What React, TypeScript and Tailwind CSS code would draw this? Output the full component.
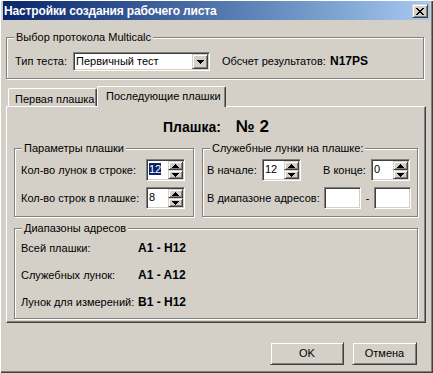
import type { ReactNode } from 'react';

const sunken =
  'border border-t-[#808080] border-l-[#808080] border-r-white border-b-white shadow-[inset_1px_1px_0_#404040,inset_-1px_-1px_0_#d4d0c8]';
const raised =
  'border border-t-[#d4d0c8] border-l-[#d4d0c8] border-r-[#404040] border-b-[#404040] shadow-[inset_1px_1px_0_#ffffff,inset_-1px_-1px_0_#808080]';

function Group({ title, className, children }: { title: string; className: string; children?: ReactNode }) {
  return (
    <div className={`relative border border-[#808080] shadow-[inset_1px_1px_0_#ffffff,1px_1px_0_#ffffff] ${className}`}>
      <span className="absolute left-[7px] top-[-7px] bg-[#d4d0c8] px-[2px] leading-[13px]">{title}</span>
      {children}
    </div>
  );
}

function Arrow({ down }: { down?: boolean }) {
  return (
    <svg width="7" height="4" viewBox="0 0 7 4" shapeRendering="crispEdges">
      <polygon points={down ? '0,0 7,0 3.5,4' : '3.5,0 7,4 0,4'} fill="#000" />
    </svg>
  );
}

function Spin({ value, selected, className }: { value: string; selected?: boolean; className: string }) {
  return (
    <div className={`flex h-[22px] bg-white ${sunken} ${className}`}>
      <div className="flex-1 pl-[2px] pt-[2px] leading-[14px]">
        <span className={selected ? 'bg-[#0a246a] text-white' : ''}>{value}</span>
      </div>
      <div className="flex w-[16px] flex-col pr-[1px] pt-[1px] pb-[1px]">
        <div className={`flex h-[10px] items-center justify-center bg-[#d4d0c8] ${raised}`}>
          <Arrow />
        </div>
        <div className={`flex h-[10px] items-center justify-center bg-[#d4d0c8] ${raised}`}>
          <Arrow down />
        </div>
      </div>
    </div>
  );
}

function CloseX() {
  const rows = ['XX....XX', '.XX..XX.', '..XXXX..', '...XX...', '..XXXX..', '.XX..XX.', 'XX....XX'];
  return (
    <svg width="8" height="7" viewBox="0 0 8 7" shapeRendering="crispEdges">
      {rows.flatMap((r, y) =>
        r.split('').map((c, x) => (c === 'X' ? <rect key={`${x}-${y}`} x={x} y={y} width="1" height="1" fill="#000" /> : null))
      )}
    </svg>
  );
}

export default function App() {
  return (
    <div className="h-[373px] w-[433px] overflow-hidden bg-[#d4d0c8] pt-[1px] font-['Liberation_Sans',Arial,sans-serif] text-[11px] text-black shadow-[inset_1px_1px_0_#ffffff,inset_-1px_-1px_0_#404040,inset_-2px_-2px_0_#808080]">
      {/* title bar */}
      <div className="ml-[3px] mr-[3px] flex h-[19px] items-start justify-between bg-gradient-to-r from-[#0a246a] to-[#a6caf0]">
        <span className="pl-[1px] pt-[3px] text-[12px] font-bold leading-[14px] tracking-[-0.15px] text-white">Настройки создания рабочего листа</span>
        <div className={`mr-[2px] mt-[3px] flex h-[14px] w-[16px] items-center justify-center bg-[#d4d0c8] ${raised}`}>
          <CloseX />
        </div>
      </div>

      {/* protocol group */}
      <Group title="Выбор протокола Multicalc" className="ml-[6px] mt-[17px] h-[42px] w-[418px] pl-[8px] pt-[14px]">
        <div className="flex items-center">
          <span className="w-[58px] leading-[13px]">Тип теста:</span>
          <div className={`flex h-[19px] w-[137px] items-center bg-white ${sunken}`}>
            <span className="flex-1 pl-[2px] leading-[13px]">Первичный тест</span>
            <div className={`mr-[1px] flex h-[15px] w-[16px] items-center justify-center bg-[#d4d0c8] ${raised}`}>
              <Arrow down />
            </div>
          </div>
          <span className="ml-[12px] w-[108px] leading-[13px]">Обсчет результатов:</span>
          <span className="text-[12px] font-bold leading-[13px]">N17PS</span>
        </div>
      </Group>

      {/* tabs */}
      <div className="ml-[8px] mt-[7px] flex h-[20px] items-end">
        <div className="h-[18px] w-[89px] rounded-t-[2px] border-l border-t border-r border-l-white border-t-white border-r-[#404040] pl-[6px] pt-[4px] leading-[13px] shadow-[inset_-1px_0_0_#808080]">
          Первая плашка
        </div>
        <div className="relative z-10 -mb-[1px] h-[21px] w-[129px] rounded-t-[2px] border-l border-t border-r border-l-white border-t-white border-r-[#404040] bg-[#d4d0c8] pl-[8px] pt-[3px] leading-[13px] shadow-[inset_-1px_0_0_#808080]">
          Последующие плашки
        </div>
      </div>

      {/* panel */}
      <div className="ml-[6px] flex h-[217px] w-[420px] flex-col border border-l-white border-t-white border-r-[#404040] border-b-[#404040] pl-[7px] shadow-[inset_-1px_-1px_0_#808080]">
        <div className="-ml-[7px] flex h-[41px] items-baseline justify-center gap-[15px] pt-[12px] font-bold">
          <span className="text-[14px] leading-[16px]">Плашка:</span>
          <span className="text-[17px] leading-[16px]">№ 2</span>
        </div>

        <div className="flex gap-[8px]">
          <Group title="Параметры плашки" className="h-[69px] w-[180px] pl-[6px] pt-[10px]">
            <div className="flex flex-col gap-[6px]">
              <div className="flex items-center">
                <span className="w-[125px] leading-[13px]">Кол-во лунок в строке:</span>
                <Spin value="12" selected className="w-[39px]" />
              </div>
              <div className="flex items-center">
                <span className="w-[125px] leading-[13px]">Кол-во строк в плашке:</span>
                <Spin value="8" className="w-[39px]" />
              </div>
            </div>
          </Group>

          <Group title="Служебные лунки на плашке:" className="h-[69px] w-[216px] pl-[4px] pt-[10px]">
            <div className="flex flex-col gap-[6px]">
              <div className="flex items-center">
                <span className="w-[55px] leading-[13px]">В начале:</span>
                <Spin value="12" className="w-[39px]" />
                <span className="ml-[22px] w-[48px] leading-[13px]">В конце:</span>
                <Spin value="0" className="w-[39px]" />
              </div>
              <div className="flex items-center">
                <span className="w-[117px] leading-[13px]">В диапазоне адресов:</span>
                <div className={`h-[22px] w-[37px] bg-white ${sunken}`} />
                <span className="w-[13px] text-center leading-[13px]">-</span>
                <div className={`h-[22px] w-[37px] bg-white ${sunken}`} />
              </div>
            </div>
          </Group>
        </div>

        <Group title="Диапазоны адресов" className="mt-[11px] h-[91px] w-[404px] pl-[6px] pt-[13px]">
          <div className="flex flex-col gap-[14px] leading-[13px]">
            {[
              ['Всей плашки:', 'A1 - H12'],
              ['Служебных лунок:', 'A1 - A12'],
              ['Лунок для измерений:', 'B1 - H12'],
            ].map(([label, value]) => (
              <div key={label} className="flex h-[13px] items-baseline">
                <span className="w-[117px]">{label}</span>
                <span className="text-[12px] font-bold">{value}</span>
              </div>
            ))}
          </div>
        </Group>
      </div>

      {/* buttons */}
      <div className="ml-[270px] mt-[19px] flex gap-[8px]">
        <button className={`h-[23px] w-[74px] bg-[#d4d0c8] leading-[13px] ${raised}`}>OK</button>
        <button className={`h-[23px] w-[65px] bg-[#d4d0c8] leading-[13px] ${raised}`}>Отмена</button>
      </div>
    </div>
  );
}
